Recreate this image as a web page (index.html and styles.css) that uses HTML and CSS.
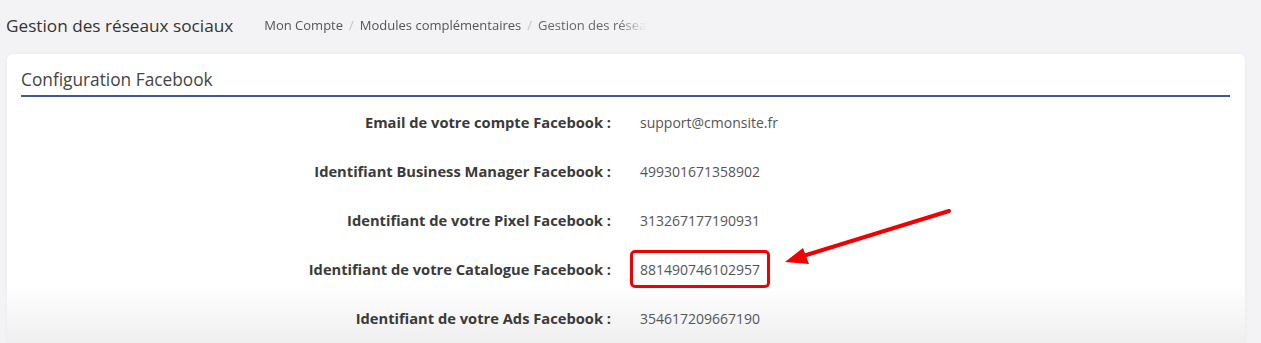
FILE: index.html
```html
<!DOCTYPE html>
<html lang="fr">

<head>
    <meta charset="UTF-8">
    <meta name="viewport" content="width=device-width, initial-scale=1.0">
    <title>Gestion des réseaux sociaux</title>
    <link rel="stylesheet" href="styles.css">
</head>

<body>

    <header class="topbar">
        <h1>Gestion des réseaux sociaux</h1>
        <ol class="breadcrumb">
            <li><a href="#">Mon Compte</a></li>
            <li><a href="#">Modules complémentaires</a></li>
            <li class="current">Gestion des réseaux sociaux</li>
        </ol>
    </header>

    <section class="card">
        <h2 class="card-title">Configuration Facebook</h2>

        <div class="rows">
            <div class="row">
                <span class="label">Email de votre compte Facebook :</span>
                <span class="value">support@cmonsite.fr</span>
            </div>
            <div class="row">
                <span class="label">Identifiant Business Manager Facebook :</span>
                <span class="value">499301671358902</span>
            </div>
            <div class="row">
                <span class="label">Identifiant de votre Pixel Facebook :</span>
                <span class="value">313267177190931</span>
            </div>
            <div class="row">
                <span class="label">Identifiant de votre Catalogue Facebook :</span>
                <span class="value highlight">881490746102957</span>
            </div>
            <div class="row">
                <span class="label">Identifiant de votre Ads Facebook :</span>
                <span class="value">354617209667190</span>
            </div>
        </div>
    </section>

    <!-- annotation arrow pointing at the catalogue id -->
    <svg class="arrow" width="180" height="70" viewBox="780 200 180 70">
        <line x1="949" y1="211" x2="800" y2="257" stroke="#f00000" stroke-width="4" stroke-linecap="round" />
        <polygon points="785,262 803,248 809,264" fill="#f00000" />
    </svg>

</body>

</html>
```

FILE: styles.css
```css
body {
    font-family: 'Open Sans', 'Noto Sans', sans-serif;
    margin: 0;
    padding: 0;
    background-color: #f3f3f5;
    color: #3a3a3a;
    position: relative;
    height: 343px;
    overflow: hidden;
}

.topbar {
    display: flex;
    align-items: center;
    height: 50px;
    padding: 0 6px;
}

.topbar h1 {
    margin: 0;
    font-size: 17.2px;
    font-weight: 400;
    color: #333;
}

.breadcrumb {
    display: flex;
    list-style: none;
    margin: 0 0 0 31px;
    padding: 0;
    font-size: 13px;
    width: 382px;
    overflow: hidden;
    white-space: nowrap;
    -webkit-mask-image: linear-gradient(to right, #000 355px, transparent 382px);
    mask-image: linear-gradient(to right, #000 355px, transparent 382px);
}

.breadcrumb li {
    color: #666;
}

.breadcrumb li + li::before {
    content: "/";
    color: #c4c4c4;
    padding: 0 6px;
}

.breadcrumb a {
    color: #555;
    text-decoration: none;
}

.card {
    margin: 4px 16px 0 7px;
    background: linear-gradient(to bottom, #fff 0, #fff 230px, #ececee 300px);
    border-radius: 6px;
    padding: 0 15px 0 14px;
    height: 300px;
    box-shadow: 0 0 4px rgba(0, 0, 0, 0.04);
}

.card-title {
    margin: 0;
    height: 41px;
    font-size: 17.3px;
    font-weight: 400;
    color: #444;
    border-bottom: 2px solid #3e5a93;
    line-height: 51px;
}

.rows {
    display: flex;
    flex-direction: column;
}

.row {
    display: grid;
    grid-template-columns: 590px 1fr;
    column-gap: 29px;
    align-items: center;
    height: 49px;
}

.label {
    text-align: right;
    font-size: 14.7px;
    font-weight: 700;
    color: #3a3a3a;
}

.value {
    font-size: 14px;
    color: #555;
    justify-self: start;
    margin-left: -10px;
    padding: 7px 7px 6px;
    border: 3px solid transparent;
    border-radius: 5px;
}

.value.highlight {
    border-color: #f00000;
}

.arrow {
    position: absolute;
    left: 780px;
    top: 200px;
}
```
